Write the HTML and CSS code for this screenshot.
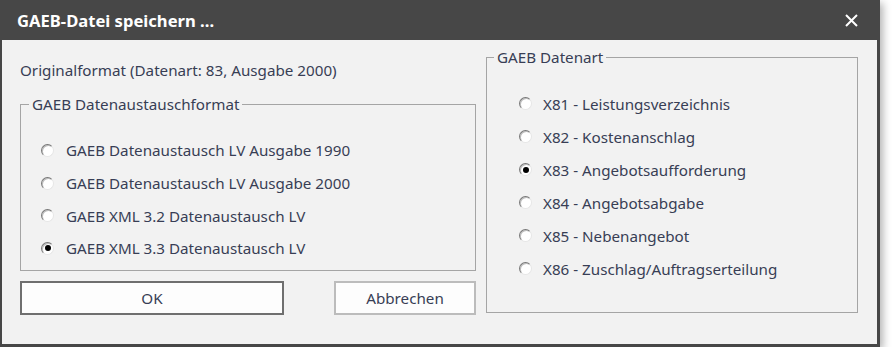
FILE: index.html
```html
<!DOCTYPE html>
<html lang="de">
<head>
    <meta charset="UTF-8">
    <title>GAEB-Datei speichern ...</title>
    <link rel="stylesheet" href="styles.css">
</head>
<body>
    <div class="window">
        <div class="titlebar">
            <span class="title">GAEB-Datei speichern ...</span>
            <svg class="close" width="13" height="13" viewBox="0 0 13 13">
                <path d="M1 1 L12 12 M12 1 L1 12" stroke="#fff" stroke-width="2" fill="none"/>
            </svg>
        </div>

        <div class="content">
            <!-- Linke Spalte -->
            <div class="col-left">
                <p class="info">Originalformat (Datenart: 83, Ausgabe 2000)</p>

                <fieldset class="group group-format">
                    <legend>GAEB Datenaustauschformat</legend>
                    <label class="option"><span class="radio"></span>GAEB Datenaustausch LV Ausgabe 1990</label>
                    <label class="option"><span class="radio"></span>GAEB Datenaustausch LV Ausgabe 2000</label>
                    <label class="option"><span class="radio"></span>GAEB XML 3.2 Datenaustausch LV</label>
                    <label class="option"><span class="radio checked"></span>GAEB XML 3.3 Datenaustausch LV</label>
                </fieldset>

                <div class="buttons">
                    <button class="btn btn-ok">OK</button>
                    <button class="btn btn-cancel">Abbrechen</button>
                </div>
            </div>

            <!-- Rechte Spalte -->
            <fieldset class="group group-type">
                <legend>GAEB Datenart</legend>
                <label class="option"><span class="radio"></span>X81 - Leistungsverzeichnis</label>
                <label class="option"><span class="radio"></span>X82 - Kostenanschlag</label>
                <label class="option"><span class="radio checked"></span>X83 - Angebotsaufforderung</label>
                <label class="option"><span class="radio"></span>X84 - Angebotsabgabe</label>
                <label class="option"><span class="radio"></span>X85 - Nebenangebot</label>
                <label class="option"><span class="radio"></span>X86 - Zuschlag/Auftragserteilung</label>
            </fieldset>
        </div>
    </div>
</body>
</html>
```

FILE: styles.css
```css
* {
    margin: 0;
    padding: 0;
    box-sizing: border-box;
}

body {
    font-family: "Noto Sans", Arial, sans-serif;
    font-size: 15.2px;
    color: #383e55;
    background-color: #fff;
}

.window {
    width: 880px;
    height: 347px;
    background-color: #f2f2f2;
    border: 2px solid #474747;
    border-top: none;
    border-right-width: 3px;
    border-bottom-width: 3px;
    box-shadow: 3px 3px 8px rgba(0, 0, 0, 0.3);
}

.titlebar {
    height: 40px;
    background-color: #474747;
    display: flex;
    align-items: center;
    justify-content: space-between;
    padding: 0 19px 0 15px;
}

.title {
    color: #fff;
    font-weight: bold;
    font-size: 16.6px;
}

.close {
    display: block;
    margin-top: 1px;
}

.content {
    display: flex;
    align-items: flex-start;
    gap: 10px;
    padding: 7px 0 0 18px;
}

.col-left {
    width: 456px;
}

.info {
    margin-top: 11px;
    line-height: 24px;
}

.group {
    border: 1px solid #a5a5a5;
    min-width: 0;
}

.group legend {
    padding: 0 3px;
    line-height: 20px;
}

.group-format {
    margin-top: 12px;
    padding: 20px 8px 5px 8px;
}

.group-format .option {
    height: 32.7px;
    padding-left: 12px;
    gap: 12px;
}

.group-type {
    width: 372px;
    padding: 20px 7px 27px 7px;
}

.group-type .option {
    height: 33px;
    padding-left: 25px;
    gap: 11px;
}

.option {
    display: flex;
    align-items: center;
}

.radio {
    width: 13px;
    height: 13px;
    border-radius: 50%;
    background-color: #fff;
    border: 1px solid;
    border-color: #777 #e6e6e6 #e6e6e6 #777;
    box-shadow: inset 1px 1px 0 #bdbdbd;
    display: flex;
    align-items: center;
    justify-content: center;
    flex-shrink: 0;
}

.radio.checked::after {
    content: "";
    width: 6px;
    height: 6px;
    border-radius: 50%;
    background-color: #000;
}

.buttons {
    display: flex;
    justify-content: space-between;
    margin-top: 10px;
}

.btn {
    height: 34px;
    background-color: #fdfdfd;
    font-family: inherit;
    font-size: 15.2px;
    color: inherit;
}

.btn-ok {
    width: 264px;
    border: 2px solid #6f6f6f;
}

.btn-cancel {
    width: 142px;
    border: 2px solid #bcbcbc;
}
```
